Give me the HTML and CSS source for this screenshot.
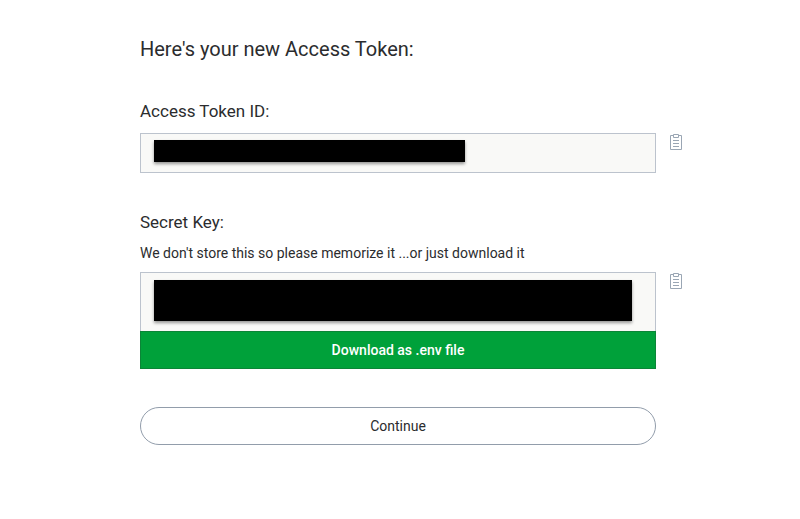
FILE: index.html
```html
<!DOCTYPE html>
<html lang="en">
<head>
<meta charset="utf-8">
<meta name="viewport" content="width=device-width, initial-scale=1">
<title>Access Token</title>
<link rel="stylesheet" href="styles.css">
</head>
<body>
<main class="page">
  <h1 class="title">Here's your new Access Token:</h1>

  <section class="field">
    <h2 class="label">Access Token ID:</h2>
    <div class="row">
      <div class="value"><div class="redacted redacted-id"></div></div>
      <button class="copy" type="button" aria-label="Copy Access Token ID">
        <svg viewBox="0 0 12 16" width="12" height="16" fill="none" stroke="currentColor">
          <path d="M3 1.5H.5v14h11v-14H9"/>
          <path d="M3.5 3.5v-3h5v3z"/>
          <path d="M3 6.5h6M3 9.5h6M3 12.5h6"/>
        </svg>
      </button>
    </div>
  </section>

  <section class="field">
    <h2 class="label">Secret Key:</h2>
    <p class="hint">We don't store this so please memorize it ...or just download it</p>
    <div class="row">
      <div>
        <div class="value value-secret"><div class="redacted redacted-secret"></div></div>
        <button class="download" type="button">Download as .env file</button>
      </div>
      <button class="copy" type="button" aria-label="Copy Secret Key">
        <svg viewBox="0 0 12 16" width="12" height="16" fill="none" stroke="currentColor">
          <path d="M3 1.5H.5v14h11v-14H9"/>
          <path d="M3.5 3.5v-3h5v3z"/>
          <path d="M3 6.5h6M3 9.5h6M3 12.5h6"/>
        </svg>
      </button>
    </div>
  </section>

  <div class="row">
    <button class="continue" type="button">Continue</button>
  </div>
</main>
</body>
</html>
```
FILE: styles.css
```css
* {
  box-sizing: border-box;
}

body {
  margin: 0;
  background: #fff;
  color: #2b2c2e;
  font-family: Roboto, "Liberation Sans", sans-serif;
}

.page {
  padding: 37px 118px 72px 140px;
}

.title {
  margin: 0 0 40px;
  font-size: 20px;
  line-height: 24px;
  font-weight: 400;
}

.field {
  margin-bottom: 39px;
}

.field:last-of-type {
  margin-bottom: 38px;
}

.label {
  margin: 0 0 12px;
  font-size: 17px;
  line-height: 20px;
  font-weight: 400;
}

.hint {
  margin: 0 0 10px;
  font-size: 14px;
  line-height: 18px;
}

.row {
  display: grid;
  grid-template-columns: minmax(0, 1fr) 12px;
  column-gap: 14px;
  align-items: start;
}

.value {
  height: 40px;
  padding: 6px 13px;
  border: 1px solid #bcc3cd;
  background: #f9f9f7;
}

.value-secret {
  height: 59px;
  padding-top: 7px;
  border-bottom: 0;
}

.redacted {
  max-width: 100%;
  background: #000;
  box-shadow: 0 2px 3px rgba(0, 0, 0, 0.4);
}

.redacted-id {
  width: 311px;
  height: 22px;
}

.redacted-secret {
  width: 478px;
  height: 41px;
}

button {
  font-family: inherit;
  cursor: pointer;
}

.copy {
  display: block;
  margin-top: 1px;
  padding: 0;
  border: 0;
  background: none;
  color: #9aa6b4;
}

.copy svg {
  display: block;
}

.download,
.continue {
  display: block;
  width: 100%;
  height: 38px;
  padding: 0;
  font-size: 14px;
  line-height: 18px;
}

.download {
  border: 1px solid #0b8537;
  background: #00a13a;
  color: #fff;
  font-weight: 500;
}

.continue {
  border: 1px solid #929dab;
  border-radius: 19px;
  background: #fff;
  color: #2b2c2e;
}
```
